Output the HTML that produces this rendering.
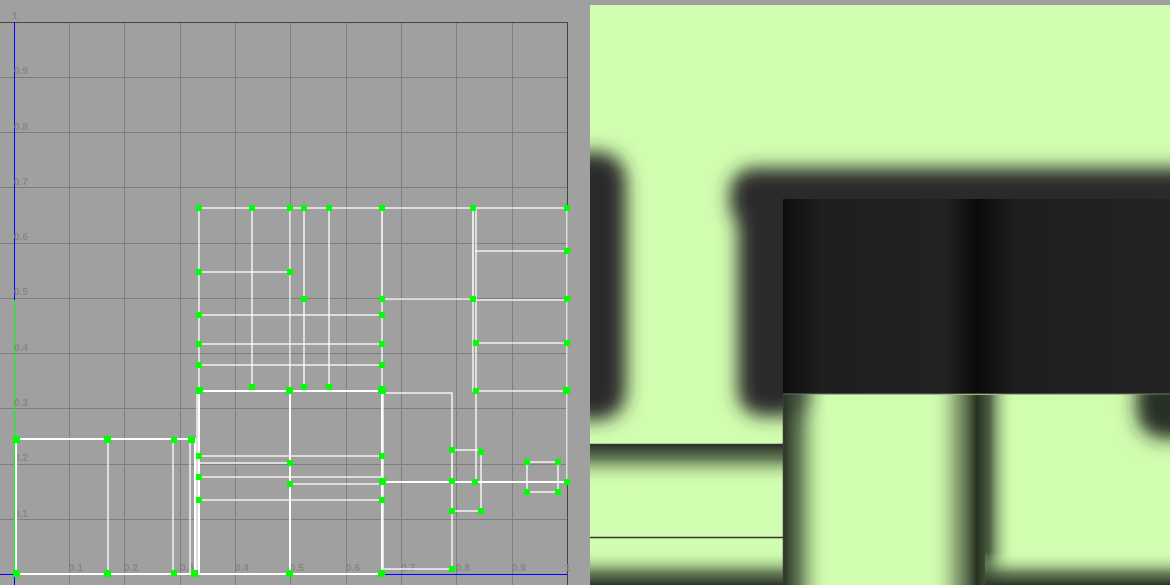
<!DOCTYPE html>
<html><head><meta charset="utf-8"><style>
html,body{margin:0;padding:0;width:1170px;height:585px;overflow:hidden;background:#a0a0a0}
svg{display:block;overflow:hidden}
text{font-family:"Liberation Sans",sans-serif;font-weight:bold;font-size:10px;fill:#858585}
</style></head><body>
<svg width="1170" height="585" viewBox="0 0 1170 585" xmlns="http://www.w3.org/2000/svg">
<defs>
<filter id="b8" filterUnits="userSpaceOnUse" x="500" y="-100" width="800" height="800"><feGaussianBlur stdDeviation="9"/></filter>
<filter id="b14" filterUnits="userSpaceOnUse" x="500" y="-100" width="800" height="800"><feGaussianBlur stdDeviation="14"/></filter>
<clipPath id="rp"><rect x="590" y="5" width="580" height="580"/></clipPath>
<clipPath id="br"><rect x="784" y="395" width="386" height="190"/></clipPath>
<linearGradient id="rg" x1="0" x2="1"><stop offset="0" stop-color="#0e0e0e"/><stop offset="0.1" stop-color="#1e1e1e"/><stop offset="0.42" stop-color="#222"/><stop offset="0.5" stop-color="#0a0a0a"/><stop offset="0.6" stop-color="#1e1e1e"/><stop offset="1" stop-color="#232323"/></linearGradient>
<linearGradient id="gdown" x1="0" y1="0" x2="0" y2="1"><stop offset="0" stop-color="#2a3526" stop-opacity="1"/><stop offset="0.35" stop-color="#4c5e42" stop-opacity="0.8"/><stop offset="1" stop-color="#d1fdb0" stop-opacity="0"/></linearGradient>
<linearGradient id="gup" x1="0" y1="1" x2="0" y2="0"><stop offset="0" stop-color="#2a3526" stop-opacity="1"/><stop offset="0.35" stop-color="#4c5e42" stop-opacity="0.8"/><stop offset="1" stop-color="#d1fdb0" stop-opacity="0"/></linearGradient>
<linearGradient id="gright" x1="0" y1="0" x2="1" y2="0"><stop offset="0" stop-color="#2a3526" stop-opacity="1"/><stop offset="0.35" stop-color="#4c5e42" stop-opacity="0.8"/><stop offset="1" stop-color="#d1fdb0" stop-opacity="0"/></linearGradient>
<linearGradient id="gband" x1="0" y1="0" x2="1" y2="0"><stop offset="0" stop-color="#d1fdb0" stop-opacity="0"/><stop offset="0.3" stop-color="#6f8560" stop-opacity="0.7"/><stop offset="0.55" stop-color="#263020" stop-opacity="1"/><stop offset="0.7" stop-color="#3e4c36" stop-opacity="0.9"/><stop offset="1" stop-color="#d1fdb0" stop-opacity="0"/></linearGradient>
</defs>
<g stroke="#7e7e7e" stroke-width="1">
<line x1="69.5" y1="22" x2="69.5" y2="585"/><line x1="124.5" y1="22" x2="124.5" y2="585"/><line x1="180.5" y1="22" x2="180.5" y2="585"/><line x1="235.5" y1="22" x2="235.5" y2="585"/><line x1="290.5" y1="22" x2="290.5" y2="585"/><line x1="346.5" y1="22" x2="346.5" y2="585"/><line x1="401.5" y1="22" x2="401.5" y2="585"/><line x1="456.5" y1="22" x2="456.5" y2="585"/><line x1="512.5" y1="22" x2="512.5" y2="585"/>
<line x1="0" y1="77.5" x2="567" y2="77.5"/><line x1="0" y1="132.5" x2="567" y2="132.5"/><line x1="0" y1="187.5" x2="567" y2="187.5"/><line x1="0" y1="243.5" x2="567" y2="243.5"/><line x1="0" y1="298.5" x2="567" y2="298.5"/><line x1="0" y1="353.5" x2="567" y2="353.5"/><line x1="0" y1="408.5" x2="567" y2="408.5"/><line x1="0" y1="464.5" x2="567" y2="464.5"/><line x1="0" y1="519.5" x2="567" y2="519.5"/>
</g>
<line x1="0" y1="22.5" x2="567" y2="22.5" stroke="#444"/>
<line x1="567.5" y1="22" x2="567.5" y2="585" stroke="#444"/>
<line x1="14.5" y1="22" x2="14.5" y2="585" stroke="#0000ff"/>
<line x1="0" y1="574.5" x2="14" y2="574.5" stroke="#0000ff"/>
<line x1="382" y1="574.5" x2="567" y2="574.5" stroke="#0000ff"/>
<line x1="14" y1="574.5" x2="195" y2="574.5" stroke="#ff0000"/>
<line x1="14.5" y1="300" x2="14.5" y2="574" stroke="#00ff00"/>
<g>
<text x="12" y="19">1</text><text x="14" y="74">0.9</text><text x="14" y="130">0.8</text><text x="14" y="185">0.7</text><text x="14" y="240">0.6</text><text x="14" y="295">0.5</text><text x="14" y="351">0.4</text><text x="14" y="406">0.3</text><text x="14" y="461">0.2</text><text x="14" y="517">0.1</text>
<text x="69" y="571">0.1</text><text x="124" y="571">0.2</text><text x="180" y="571">0.3</text><text x="235" y="571">0.4</text><text x="290" y="571">0.5</text><text x="346" y="571">0.6</text><text x="401" y="571">0.7</text><text x="456" y="571">0.8</text><text x="512" y="571">0.9</text><text x="565" y="571">1</text>
</g>
<g stroke="#fff" fill="none" stroke-width="1.3">
<rect x="199" y="208" width="183" height="183"/>
<line x1="252" y1="208" x2="252" y2="390"/><line x1="290" y1="208" x2="290" y2="390"/><line x1="304" y1="208" x2="304" y2="390"/><line x1="329" y1="210" x2="329" y2="387"/>
<line x1="199" y1="272" x2="290" y2="272"/><line x1="199" y1="315" x2="382" y2="315"/><line x1="199" y1="344" x2="382" y2="344"/><line x1="199" y1="365" x2="382" y2="365"/>
<rect x="382" y="208" width="91" height="91"/>
<rect x="473" y="208" width="94" height="183"/><line x1="476" y1="208" x2="476" y2="391"/>
<line x1="475" y1="251" x2="567" y2="251"/><line x1="475" y1="300" x2="567" y2="300"/><line x1="475" y1="343" x2="567" y2="343"/>
<rect x="199" y="391" width="183" height="183" stroke-width="2"/>
<line x1="290" y1="391" x2="290" y2="574" stroke-width="2"/><line x1="197" y1="391" x2="197" y2="574"/>
<line x1="199" y1="456" x2="382" y2="456"/><line x1="199" y1="463" x2="290" y2="463"/><line x1="199" y1="477" x2="382" y2="477"/><line x1="199" y1="500" x2="382" y2="500"/><line x1="290" y1="484" x2="382" y2="484"/>
<rect x="383" y="393" width="69" height="176"/>
<rect x="452" y="450" width="29" height="61"/>
<line x1="382" y1="482" x2="567" y2="482" stroke-width="2"/>
<rect x="527" y="462" width="31" height="30"/>
<line x1="476" y1="391" x2="476" y2="482"/><line x1="567" y1="391" x2="567" y2="482"/>
<rect x="16" y="439" width="179" height="135" stroke-width="2"/>
<line x1="108" y1="439" x2="108" y2="574"/><line x1="173" y1="439" x2="173" y2="574"/><line x1="190" y1="439" x2="190" y2="574"/>
</g>
<g fill="#00ff00">
<rect x="196" y="205" width="6" height="6"/><rect x="249" y="205" width="6" height="6"/><rect x="287" y="205" width="6" height="6"/><rect x="301" y="205" width="6" height="6"/><rect x="326" y="205" width="6" height="6"/><rect x="379" y="205" width="6" height="6"/><rect x="470" y="205" width="6" height="6"/><rect x="564" y="205" width="6" height="6"/>
<rect x="196" y="269" width="6" height="6"/><rect x="287" y="269" width="6" height="6"/><rect x="301" y="296" width="6" height="6"/><rect x="379" y="296" width="6" height="6"/><rect x="470" y="296" width="6" height="6"/><rect x="564" y="296" width="6" height="6"/><rect x="564" y="248" width="6" height="6"/>
<rect x="196" y="312" width="6" height="6"/><rect x="379" y="312" width="6" height="6"/><rect x="196" y="341" width="6" height="6"/><rect x="379" y="341" width="6" height="6"/><rect x="473" y="340" width="6" height="6"/><rect x="564" y="340" width="6" height="6"/><rect x="196" y="362" width="6" height="6"/><rect x="379" y="362" width="6" height="6"/>
<rect x="196" y="387" width="7" height="7"/><rect x="249" y="384" width="6" height="6"/><rect x="286" y="387" width="7" height="7"/><rect x="301" y="384" width="6" height="6"/><rect x="326" y="384" width="6" height="6"/><rect x="378" y="386" width="8" height="8"/><rect x="473" y="388" width="6" height="6"/><rect x="563" y="387" width="7" height="7"/>
<rect x="196" y="453" width="6" height="6"/><rect x="287" y="460" width="6" height="6"/><rect x="196" y="474" width="6" height="6"/><rect x="379" y="453" width="6" height="6"/><rect x="379" y="478" width="7" height="7"/><rect x="287" y="481" width="6" height="6"/><rect x="196" y="497" width="6" height="6"/><rect x="379" y="497" width="6" height="6"/>
<rect x="449" y="447" width="6" height="6"/><rect x="478" y="449" width="6" height="6"/><rect x="449" y="478" width="6" height="6"/><rect x="472" y="479" width="6" height="6"/><rect x="449" y="508" width="6" height="6"/><rect x="478" y="508" width="6" height="6"/><rect x="564" y="479" width="6" height="6"/>
<rect x="524" y="459" width="6" height="6"/><rect x="555" y="459" width="6" height="6"/><rect x="524" y="489" width="6" height="6"/><rect x="555" y="489" width="6" height="6"/>
<rect x="13" y="436" width="7" height="7"/><rect x="104" y="436" width="7" height="7"/><rect x="171" y="437" width="6" height="6"/><rect x="188" y="436" width="7" height="7"/>
<rect x="13" y="570" width="7" height="7"/><rect x="104" y="570" width="7" height="7"/><rect x="171" y="570" width="6" height="6"/><rect x="191" y="570" width="7" height="7"/><rect x="286" y="570" width="7" height="7"/><rect x="378" y="570" width="7" height="7"/><rect x="449" y="566" width="6" height="6"/>
</g>
<rect x="590" y="5" width="580" height="580" fill="#d1fdb0"/>
<g clip-path="url(#rp)">
<g fill="#2a2a2a" filter="url(#b8)">
<rect x="560" y="152" width="66" height="268" rx="28"/>
<rect x="730" y="168" width="480" height="60" rx="24"/>
<rect x="738" y="180" width="70" height="236" rx="24"/>
<rect x="1140" y="370" width="60" height="65" rx="22"/>
</g>
<rect x="783" y="199" width="387" height="195" fill="url(#rg)"/>
<line x1="783" y1="394" x2="1170" y2="394" stroke="#6a7a60" stroke-width="1"/>
<rect x="590" y="445" width="193" height="40" fill="url(#gdown)"/>
<line x1="590" y1="444.5" x2="783" y2="444.5" stroke="#333" stroke-width="1.5"/>
<rect x="590" y="550" width="193" height="35" fill="url(#gup)"/>
<line x1="590" y1="537.5" x2="783" y2="537.5" stroke="#333" stroke-width="1.5"/>
<rect x="784" y="395" width="45" height="190" fill="url(#gright)"/>
<rect x="930" y="395" width="85" height="190" fill="url(#gband)"/>
<rect x="985" y="552" width="185" height="33" fill="url(#gup)"/>
<g clip-path="url(#br)"><g filter="url(#b14)" fill="#263320">
<rect x="1145" y="370" width="50" height="60" rx="18"/>
</g></g>
<line x1="783.5" y1="394" x2="783.5" y2="585" stroke="#3a3a3a" stroke-width="1.5"/>
</g>
</svg>
</body></html>
